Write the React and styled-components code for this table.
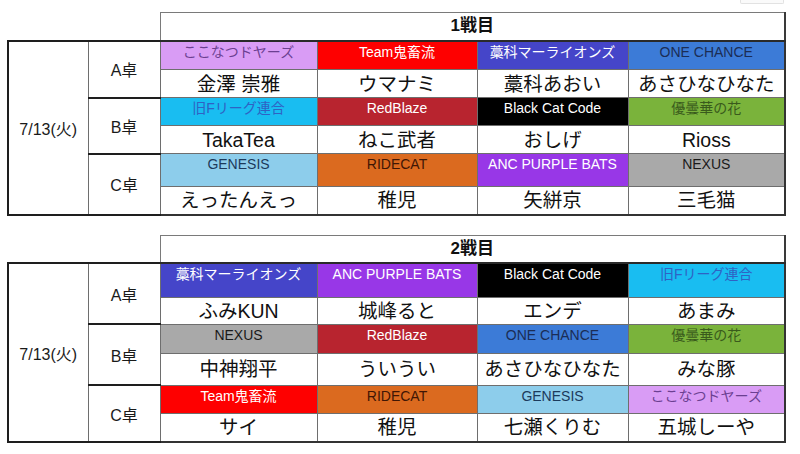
import React from "react";
import styled, { createGlobalStyle } from "styled-components";

const GlobalStyle = createGlobalStyle`
  html, body { margin: 0; padding: 0; background: #ffffff; }
  body { font-family: "Liberation Sans", "Noto Sans CJK JP", sans-serif; color: #111; }
`;

const TEAMS = {
  kokonatsu: { name: "ここなつドヤーズ", bg: "#d99cf5", fg: "#6b3f91" },
  kichiku: { name: "Team鬼畜流", bg: "#fe0000", fg: "#ffffff" },
  warashina: { name: "藁科マーライオンズ", bg: "#4545c9", fg: "#ffffff" },
  onechance: { name: "ONE CHANCE", bg: "#3c7bd7", fg: "#1b2d55" },
  oldf: { name: "旧Fリーグ連合", bg: "#19bdf1", fg: "#2f62c4" },
  redblaze: { name: "RedBlaze", bg: "#b8242f", fg: "#ffffff" },
  blackcat: { name: "Black Cat Code", bg: "#000000", fg: "#ffffff" },
  udonge: { name: "優曇華の花", bg: "#7ab33b", fg: "#395a1c" },
  genesis: { name: "GENESIS", bg: "#8dcdeb", fg: "#1c3a5b" },
  ridecat: { name: "RIDECAT", bg: "#db6a1f", fg: "#3f1605" },
  anc: { name: "ANC PURPLE BATS", bg: "#9837e7", fg: "#ffffff" },
  nexus: { name: "NEXUS", bg: "#a9a9a9", fg: "#1a1a1a" },
};

const MATCHES = [
  {
    title: "1戦目",
    date: "7/13(火)",
    heights: [28, 29, 28, 28, 28, 33, 28],
    tables: [
      { label: "A卓", entries: [["kokonatsu", "金澤 崇雅"], ["kichiku", "ウマナミ"], ["warashina", "藁科あおい"], ["onechance", "あさひなひなた"]] },
      { label: "B卓", entries: [["oldf", "TakaTea"], ["redblaze", "ねこ武者"], ["blackcat", "おしげ"], ["udonge", "Rioss"]] },
      { label: "C卓", entries: [["genesis", "えったんえっ"], ["ridecat", "稚児"], ["anc", "矢絣京"], ["nexus", "三毛猫"]] },
    ],
  },
  {
    title: "2戦目",
    date: "7/13(火)",
    heights: [28, 34, 27, 29, 32, 28, 29],
    tables: [
      { label: "A卓", entries: [["warashina", "ふみKUN"], ["anc", "城峰ると"], ["blackcat", "エンデ"], ["oldf", "あまみ"]] },
      { label: "B卓", entries: [["nexus", "中神翔平"], ["redblaze", "ういうい"], ["onechance", "あさひなひなた"], ["udonge", "みな豚"]] },
      { label: "C卓", entries: [["kichiku", "サイ"], ["ridecat", "稚児"], ["genesis", "七瀬くりむ"], ["kokonatsu", "五城しーや"]] },
    ],
  },
];

const Page = styled.div`
  width: 800px;
  height: 454px;
  box-sizing: border-box;
  padding: 0 16px 0 7px;
  display: flex;
  flex-direction: column;
  overflow: hidden;
`;

const TopBar = styled.div`
  display: flex;
  justify-content: flex-end;
  height: 12px;
`;

const CornerTab = styled.div`
  width: 42px;
  height: 3px;
  border: 1px solid #e2e2e2;
  border-top: none;
  border-radius: 0 0 2px 2px;
  background: #fafafa;
`;

const Match = styled.table`
  border-collapse: collapse;
  table-layout: fixed;
  width: 777px;
  margin-bottom: ${(p) => p.$gap}px;
`;

const Row = styled.tr`
  height: ${(p) => p.$h}px;
`;

const Blank = styled.td`
  border: none;
  padding: 0;
`;

const TitleCell = styled.td`
  border-top: 1px solid #7a7a7a;
  border-left: 1px solid #7a7a7a;
  border-right: 2px solid #3a3a3a;
  border-bottom: 2px solid #2a2a2a;
  padding: 0;
  text-align: center;
  vertical-align: middle;
  font-weight: 700;
  font-size: 17px;
  line-height: 20px;
  color: #111;
`;

const DateCell = styled.td`
  border: 2px solid #1e1e1e;
  border-right: 1px solid #6e6e6e;
  padding: 0;
  text-align: center;
  vertical-align: middle;
  font-size: 16px;
  color: #1a1a1a;
`;

const TableLabel = styled.td`
  border-top: 2px solid #1e1e1e;
  border-bottom: ${(p) => (p.$thick ? "2px solid #1e1e1e" : "1px solid #6e6e6e")};
  border-left: 1px solid #6e6e6e;
  border-right: 1px solid #6e6e6e;
  padding: 0;
  text-align: center;
  vertical-align: middle;
  font-size: 16px;
  color: #1a1a1a;
`;

const TeamCell = styled.td`
  background: ${(p) => p.$bg};
  color: ${(p) => p.$fg};
  border: 1px solid #6e6e6e;
  border-right: ${(p) => (p.$last ? "2px solid #333" : "1px solid #6e6e6e")};
  padding: 2px 0 0;
  text-align: center;
  vertical-align: top;
  font-size: 14px;
  line-height: 16px;
  white-space: nowrap;
  overflow: hidden;
`;

const PlayerCell = styled.td`
  background: #ffffff;
  color: #111;
  border: 1px solid #6e6e6e;
  border-right: ${(p) => (p.$last ? "2px solid #333" : "1px solid #6e6e6e")};
  border-bottom: ${(p) => (p.$bottom ? "2px solid #333" : "1px solid #6e6e6e")};
  padding: 0;
  text-align: center;
  vertical-align: middle;
  font-size: 19.5px;
  line-height: 22px;
  white-space: nowrap;
  overflow: hidden;
`;

function MatchTable({ match, gap }) {
  const h = match.heights;
  return (
    <Match $gap={gap}>
      <colgroup>
        <col style={{ width: 80 }} />
        <col style={{ width: 72 }} />
        <col style={{ width: 157 }} />
        <col style={{ width: 160 }} />
        <col style={{ width: 151 }} />
        <col style={{ width: 157 }} />
      </colgroup>
      <tbody>
        <Row $h={h[0]}>
          <Blank colSpan={2} />
          <TitleCell colSpan={4}>{match.title}</TitleCell>
        </Row>
        {match.tables.map((t, ti) => {
          const isLastTable = ti === match.tables.length - 1;
          return (
            <React.Fragment key={t.label}>
              <Row $h={h[1 + ti * 2]}>
                {ti === 0 && <DateCell rowSpan={6}>{match.date}</DateCell>}
                <TableLabel rowSpan={2} $thick={ti !== 1}>
                  {t.label}
                </TableLabel>
                {t.entries.map(([key], i) => (
                  <TeamCell key={i} $bg={TEAMS[key].bg} $fg={TEAMS[key].fg} $last={i === 3}>
                    {TEAMS[key].name}
                  </TeamCell>
                ))}
              </Row>
              <Row $h={h[2 + ti * 2]}>
                {t.entries.map(([, player], i) => (
                  <PlayerCell key={i} $last={i === 3} $bottom={isLastTable}>
                    {player}
                  </PlayerCell>
                ))}
              </Row>
            </React.Fragment>
          );
        })}
      </tbody>
    </Match>
  );
}

export default function App() {
  return (
    <>
      <GlobalStyle />
      <Page>
        <TopBar>
          <CornerTab />
        </TopBar>
        {MATCHES.map((m, i) => (
          <MatchTable key={m.title} match={m} gap={i === 0 ? 19 : 0} />
        ))}
      </Page>
    </>
  );
}
